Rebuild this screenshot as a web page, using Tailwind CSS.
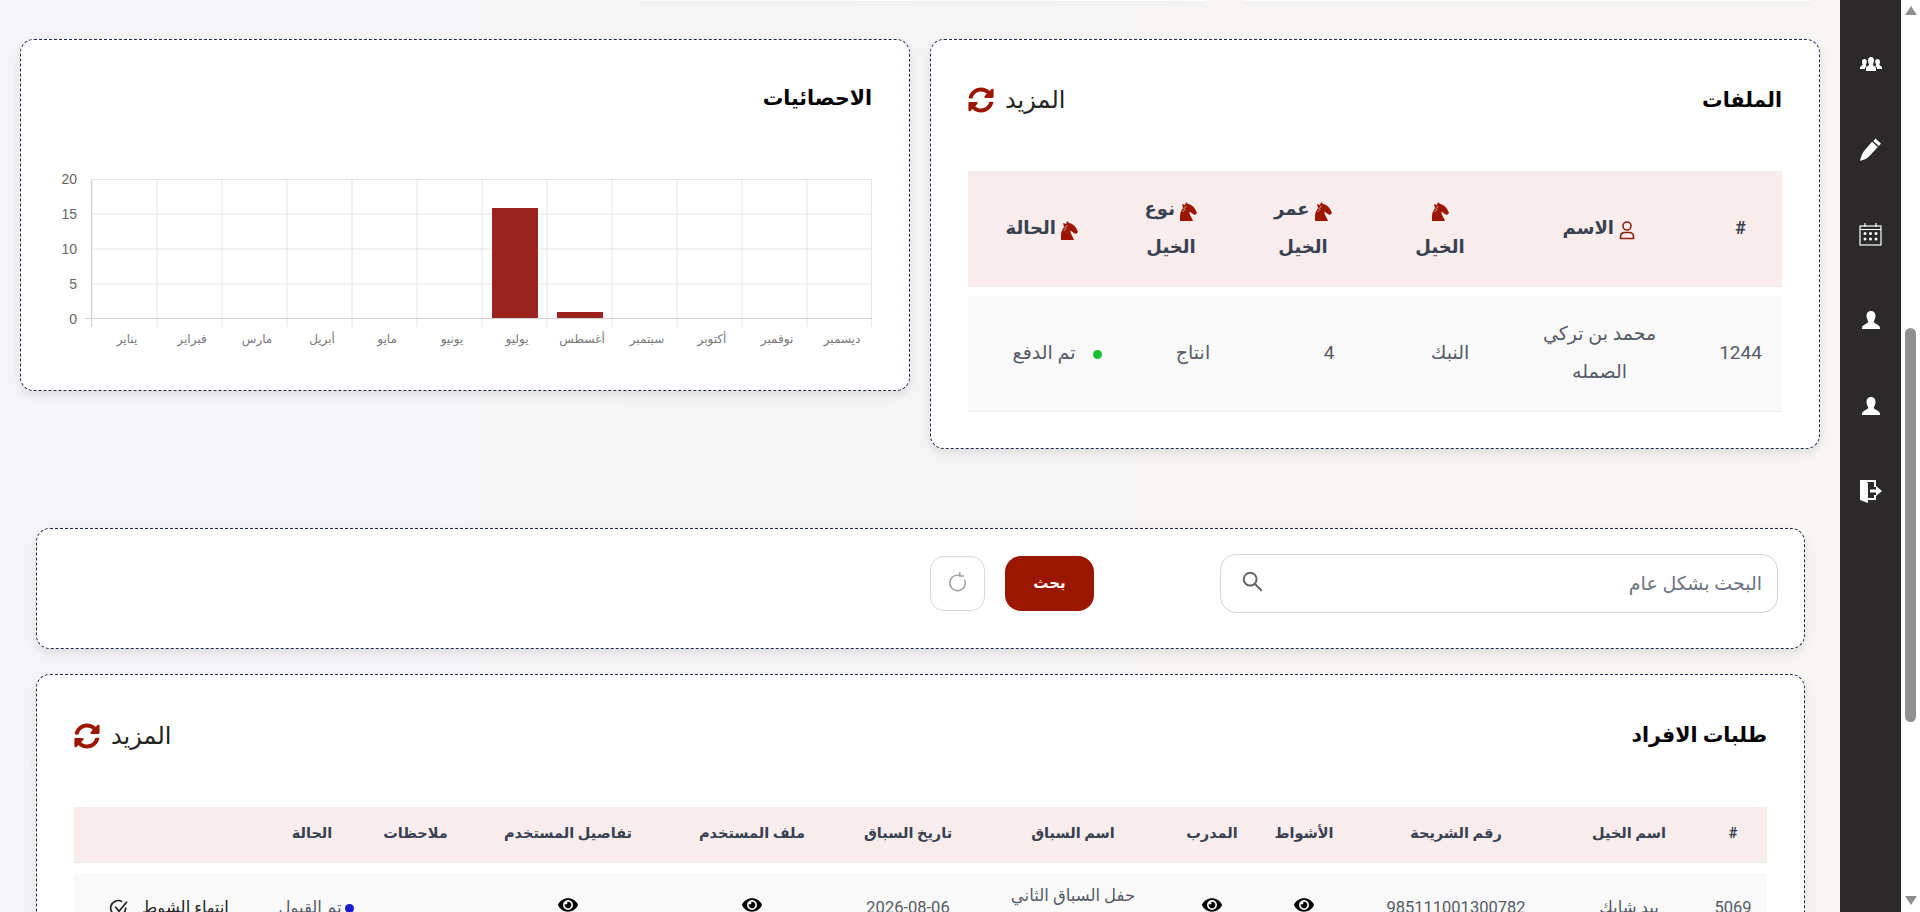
<!DOCTYPE html>
<html lang="ar">
<head>
  <meta charset="UTF-8">
  <meta name="viewport" content="width=device-width, initial-scale=1">
  <title>لوحة التحكم</title>
  <script src="https://cdn.jsdelivr.net/npm/@tailwindcss/browser@4"></script>
</head>
<body class="h-[912px] overflow-hidden font-['Roboto','DejaVu_Sans',sans-serif]">
  <div class="flex h-[912px] overflow-hidden">

    <!-- Page content -->
    <main dir="rtl" class="w-[1840px] h-[912px] overflow-hidden bg-gradient-to-l from-[#f7f6f2] to-[#f5f4f8]">

      <!-- Bottom edges of the cards scrolled out of view -->
      <div class="h-[39px] flex gap-[39px] pr-[30px]">
        <div class="w-[565px] h-px bg-white shadow-[0_2px_5px_rgba(0,0,0,0.12)]"></div>
        <div class="w-[566px] h-px bg-white shadow-[0_2px_5px_rgba(0,0,0,0.12)]"></div>
      </div>

      <div class="grid grid-cols-2 gap-[20px] px-[20px] items-start">
        <!-- Files card -->
        <section class="bg-white border border-dashed border-[#1c2b4a] rounded-[14px] shadow-[0_4px_10px_rgba(0,0,0,0.1)] px-[37px] pt-[40px] pb-[36px]">
          <div class="h-[40px] flex items-center justify-between">
            <h2 class="text-[20.5px] font-bold text-black">الملفات</h2>
            <a class="flex items-center gap-[11px] text-[24px] text-[#222]">
              <span>المزيد</span>
              <svg class="w-[26px] h-[26px] text-[#9b1500]" viewBox="0 0 512 512" fill="currentColor"><path d="M370.72 133.28C339.458 104.008 298.888 87.962 255.848 88c-77.458.068-144.328 53.178-162.791 126.85-1.344 5.363-6.122 9.15-11.651 9.15H24.103c-7.498 0-13.194-6.807-11.807-14.176C33.933 94.924 134.813 8 256 8c66.448 0 126.791 26.136 171.315 68.685L463.03 40.97C478.149 25.851 504 36.559 504 57.941V192c0 13.255-10.745 24-24 24H345.941c-21.382 0-32.09-25.851-16.971-40.971l41.75-41.749zM32 296h134.059c21.382 0 32.09 25.851 16.971 40.971l-41.75 41.75c31.262 29.273 71.835 45.319 114.876 45.28 77.418-.07 144.315-53.144 162.787-126.849 1.344-5.363 6.122-9.15 11.651-9.15h57.304c7.498 0 13.194 6.807 11.807 14.176C478.067 417.076 377.187 504 256 504c-66.448 0-126.791-26.136-171.315-68.685L48.97 471.03C33.851 486.149 8 475.441 8 454.059V320c0-13.255 10.745-24 24-24z"/></svg>
            </a>
          </div>
          <table class="mt-[51px] w-full table-fixed border-collapse text-center leading-[38px]">
            <thead class="bg-[#f9ecec] text-[#374151] font-bold text-[18px]">
              <tr class="h-[115px] border-b border-[#f0e6e6]">
                <th class="w-[83px]">#</th>
                <th class="w-[199px]">
                  <svg class="inline w-[18px] h-[20px] text-[#8f1f10]" viewBox="0 0 18 20" fill="none" stroke="currentColor" stroke-width="1.6"><circle cx="9" cy="6" r="4"/><path d="M2.5 18.5v-2a4 4 0 0 1 4-4h5a4 4 0 0 1 4 4v2z"/></svg>
                  الاسم
                </th>
                <th class="w-[120px]">
                  <svg class="inline w-[18px] h-[20px] text-[#9b1500]" viewBox="0 0 18 20" fill="currentColor"><path d="M1 20v-5c0-4 2-6 3-8L3 3l3 1 1-3 2 2c4 .5 7 4 9 9l-2 2-3-1.500-2.500-2c-.5 3 2.500 6 3.500 9.500z"/><path d="M3.500 11l3-3M4.500 8l3-3" stroke="#f9ecec" stroke-width=".7"/></svg>
                  <br>الخيل
                </th>
                <th class="w-[154px]">
                  <svg class="inline w-[18px] h-[20px] text-[#9b1500]" viewBox="0 0 18 20" fill="currentColor"><path d="M1 20v-5c0-4 2-6 3-8L3 3l3 1 1-3 2 2c4 .5 7 4 9 9l-2 2-3-1.500-2.500-2c-.5 3 2.500 6 3.500 9.500z"/><path d="M3.500 11l3-3M4.500 8l3-3" stroke="#f9ecec" stroke-width=".7"/></svg>
                  عمر<br>الخيل
                </th>
                <th class="w-[110px]">
                  <svg class="inline w-[18px] h-[20px] text-[#9b1500]" viewBox="0 0 18 20" fill="currentColor"><path d="M1 20v-5c0-4 2-6 3-8L3 3l3 1 1-3 2 2c4 .5 7 4 9 9l-2 2-3-1.500-2.500-2c-.5 3 2.500 6 3.500 9.500z"/><path d="M3.500 11l3-3M4.500 8l3-3" stroke="#f9ecec" stroke-width=".7"/></svg>
                  نوع<br>الخيل
                </th>
                <th>
                  <svg class="inline w-[18px] h-[20px] text-[#9b1500]" viewBox="0 0 18 20" fill="currentColor"><path d="M1 20v-5c0-4 2-6 3-8L3 3l3 1 1-3 2 2c4 .5 7 4 9 9l-2 2-3-1.500-2.500-2c-.5 3 2.500 6 3.500 9.500z"/><path d="M3.500 11l3-3M4.500 8l3-3" stroke="#f9ecec" stroke-width=".7"/></svg>
                  الحالة
                </th>
              </tr>
            </thead>
            <tbody class="text-[#555b66] text-[19px]">
              <tr class="h-[10px]"><td colspan="6"></td></tr>
              <tr class="h-[115px] bg-[#f9f9f9] border-b border-[#e5e7eb]">
                <td>1244</td>
                <td>محمد بن تركي<br>الصمله</td>
                <td class="pl-[20px]">النبك</td>
                <td class="pl-[52px]">4</td>
                <td class="pl-[44px]">انتاج</td>
                <td class="pl-[31px] whitespace-nowrap">
                  <span class="inline-block w-[9px] h-[9px] rounded-full bg-[#16c02f] ml-[18px]"></span>تم الدفع
                </td>
              </tr>
            </tbody>
          </table>
        </section>

        <!-- Statistics card -->
        <section class="bg-white border border-dashed border-[#1c2b4a] rounded-[14px] shadow-[0_4px_10px_rgba(0,0,0,0.1)] px-[37px] pt-[40px] pb-[30px]">
          <h2 class="h-[36px] leading-[36px] text-[20.5px] font-bold text-black">الاحصائيات</h2>
          <svg class="mt-[54px] w-[815px] h-[190px] [direction:ltr] font-['Liberation_Sans','DejaVu_Sans',sans-serif]" viewBox="0 0 815 190" fill="none">
            <g stroke="#e4e6e8">
              <path d="M35 9.5H815M35 44H815M35 79H815M35 114H815"/>
              <path d="M35 9.5V157M100 9.5V157M165 9.5V157M230 9.5V157M295 9.5V157M360 9.5V157M425 9.5V157M490 9.5V157M555 9.5V157M620 9.5V157M685 9.5V157M750 9.5V157M814.5 9.5V157"/>
            </g>
            <path d="M28 148.5H815" stroke="#cfd2d4"/>
            <path d="M34.5 9.5V157" stroke="#cfd2d4"/>
            <rect x="435" y="38" width="46" height="110" fill="#9b2320"/>
            <rect x="500" y="142" width="46" height="6" fill="#9b2320"/>
            <g fill="#666" font-size="14" text-anchor="end">
              <text x="20" y="14">20</text>
              <text x="20" y="49">15</text>
              <text x="20" y="84">10</text>
              <text x="20" y="119">5</text>
              <text x="20" y="154">0</text>
            </g>
            <g fill="#777" font-size="12" text-anchor="middle">
              <text x="70" y="173">يناير</text>
              <text x="135" y="173">فبراير</text>
              <text x="200" y="173">مارس</text>
              <text x="265" y="173">أبريل</text>
              <text x="330" y="173">مايو</text>
              <text x="395" y="173">يونيو</text>
              <text x="460" y="173">يوليو</text>
              <text x="525" y="173">أغسطس</text>
              <text x="590" y="173">سبتمبر</text>
              <text x="655" y="173">أكتوبر</text>
              <text x="720" y="173">نوفمبر</text>
              <text x="785" y="173">ديسمبر</text>
            </g>
          </svg>
        </section>
      </div>

      <!-- Search card -->
      <section class="mt-[79px] mr-[35px] ml-[36px] h-[121px] bg-white border border-dashed border-[#1c2b4a] rounded-[14px] shadow-[0_4px_10px_rgba(0,0,0,0.1)] pr-[26px] pb-[10px] flex items-center">
        <div class="w-[558px] h-[59px] border border-[#d1d5db] rounded-[16px] flex items-center justify-between px-[15px]">
          <span class="pt-[3px] text-[19px] text-[#6b7280]">البحث بشكل عام</span>
          <svg class="w-[22px] h-[22px] ml-[5px] mb-[5px]" viewBox="0 0 24 24" fill="none" stroke="#666" stroke-width="2.2" stroke-linecap="round"><circle cx="10" cy="10" r="7"/><path d="M15.500 15.500L22 22"/></svg>
        </div>
        <button class="mr-[126px] w-[89px] h-[55px] rounded-[16px] bg-[#9a1600] text-white font-bold text-[15px]">بحث</button>
        <button class="mr-[20px] w-[55px] h-[55px] rounded-[14px] border border-[#d8d8d8] flex items-center justify-center">
          <svg class="w-[22px] h-[22px]" viewBox="0 0 24 24" fill="none" stroke="#9a9a9a" stroke-width="1.500" stroke-linecap="round" stroke-linejoin="round"><path d="M19.500 9A8.500 8.500 0 1 1 14 3.800"/><path d="M14 0.500v3.800h3.800"/></svg>
        </button>
      </section>

      <!-- Members requests card -->
      <section class="mt-[25px] mr-[35px] ml-[36px] bg-white border border-dashed border-[#1c2b4a] rounded-[14px] shadow-[0_4px_10px_rgba(0,0,0,0.1)] px-[37px] pt-[41px] pb-[36px]">
        <div class="h-[40px] flex items-center justify-between">
          <h2 class="text-[20.5px] font-bold text-black">طلبات الافراد</h2>
          <a class="flex items-center gap-[11px] text-[24px] text-[#222]">
            <span>المزيد</span>
            <svg class="w-[26px] h-[26px] text-[#9b1500]" viewBox="0 0 512 512" fill="currentColor"><path d="M370.72 133.28C339.458 104.008 298.888 87.962 255.848 88c-77.458.068-144.328 53.178-162.791 126.85-1.344 5.363-6.122 9.15-11.651 9.15H24.103c-7.498 0-13.194-6.807-11.807-14.176C33.933 94.924 134.813 8 256 8c66.448 0 126.791 26.136 171.315 68.685L463.03 40.97C478.149 25.851 504 36.559 504 57.941V192c0 13.255-10.745 24-24 24H345.941c-21.382 0-32.09-25.851-16.971-40.971l41.75-41.749zM32 296h134.059c21.382 0 32.09 25.851 16.971 40.971l-41.75 41.75c31.262 29.273 71.835 45.319 114.876 45.28 77.418-.07 144.315-53.144 162.787-126.849 1.344-5.363 6.122-9.15 11.651-9.15h57.304c7.498 0 13.194 6.807 11.807 14.176C478.067 417.076 377.187 504 256 504c-66.448 0-126.791-26.136-171.315-68.685L48.97 471.03C33.851 486.149 8 475.441 8 454.059V320c0-13.255 10.745-24 24-24z"/></svg>
          </a>
        </div>
        <table class="mt-[51px] w-full table-fixed border-collapse text-center leading-[24px]">
          <thead class="bg-[#f9ecec] text-[#374151] font-bold text-[14.5px]">
            <tr class="h-[56px] border-b border-[#f0e6e6]">
              <th class="w-[68px]">#</th>
              <th class="w-[140px]">اسم الخيل</th>
              <th class="w-[206px]">رقم الشريحة</th>
              <th class="w-[98px]">الأشواط</th>
              <th class="w-[86px]">المدرب</th>
              <th class="w-[192px]">اسم السباق</th>
              <th class="w-[138px]">تاريخ السباق</th>
              <th class="w-[174px]">ملف المستخدم</th>
              <th class="w-[194px]">تفاصيل المستخدم</th>
              <th class="w-[111px]">ملاحظات</th>
              <th class="w-[96px]">الحالة</th>
              <th></th>
            </tr>
          </thead>
          <tbody class="text-[#555b66] text-[16.5px]">
            <tr class="h-[10px]"><td colspan="12"></td></tr>
            <tr class="h-[70px] bg-[#f9f9f9]">
              <td>5069</td>
              <td>بيد شايك</td>
              <td>985111001300782</td>
              <td><svg class="inline align-middle mb-[6px] w-[20px] h-[18px] text-black" viewBox="0 0 576 512" fill="currentColor"><path d="M572.52 241.4C518.29 135.59 410.93 64 288 64S57.68 135.64 3.48 241.41a32.35 32.35 0 0 0 0 29.19C57.71 376.41 165.07 448 288 448s230.32-71.64 284.52-177.41a32.35 32.35 0 0 0 0-29.19zM288 400a144 144 0 1 1 144-144 143.93 143.93 0 0 1-144 144zm0-240a95.31 95.31 0 0 0-25.31 3.79 47.85 47.85 0 0 1-66.9 66.9A95.78 95.78 0 1 0 288 160z"/></svg></td>
              <td><svg class="inline align-middle mb-[6px] w-[20px] h-[18px] text-black" viewBox="0 0 576 512" fill="currentColor"><path d="M572.52 241.4C518.29 135.59 410.93 64 288 64S57.68 135.64 3.48 241.41a32.35 32.35 0 0 0 0 29.19C57.71 376.41 165.07 448 288 448s230.32-71.64 284.52-177.41a32.35 32.35 0 0 0 0-29.19zM288 400a144 144 0 1 1 144-144 143.93 143.93 0 0 1-144 144zm0-240a95.31 95.31 0 0 0-25.31 3.79 47.85 47.85 0 0 1-66.9 66.9A95.78 95.78 0 1 0 288 160z"/></svg></td>
              <td class="pb-[24px]">حفل السباق الثاني</td>
              <td>2026-08-06</td>
              <td><svg class="inline align-middle mb-[6px] w-[20px] h-[18px] text-black" viewBox="0 0 576 512" fill="currentColor"><path d="M572.52 241.4C518.29 135.59 410.93 64 288 64S57.68 135.64 3.48 241.41a32.35 32.35 0 0 0 0 29.19C57.71 376.41 165.07 448 288 448s230.32-71.64 284.52-177.41a32.35 32.35 0 0 0 0-29.19zM288 400a144 144 0 1 1 144-144 143.93 143.93 0 0 1-144 144zm0-240a95.31 95.31 0 0 0-25.31 3.79 47.85 47.85 0 0 1-66.9 66.9A95.78 95.78 0 1 0 288 160z"/></svg></td>
              <td><svg class="inline align-middle mb-[6px] w-[20px] h-[18px] text-black" viewBox="0 0 576 512" fill="currentColor"><path d="M572.52 241.4C518.29 135.59 410.93 64 288 64S57.68 135.64 3.48 241.41a32.35 32.35 0 0 0 0 29.19C57.71 376.41 165.07 448 288 448s230.32-71.64 284.52-177.41a32.35 32.35 0 0 0 0-29.19zM288 400a144 144 0 1 1 144-144 143.93 143.93 0 0 1-144 144zm0-240a95.31 95.31 0 0 0-25.31 3.79 47.85 47.85 0 0 1-66.9 66.9A95.78 95.78 0 1 0 288 160z"/></svg></td>
              <td></td>
              <td class="pl-[8px] whitespace-nowrap"><span class="inline-block w-[9px] h-[9px] rounded-full bg-[#1a1ad0] ml-[3px]"></span>تم القبول</td>
              <td class="text-[#222]">
                <span class="inline-flex items-center gap-[13px]">إنتهاء الشوط
                  <svg class="w-[20px] h-[20px]" viewBox="0 0 24 24" fill="none" stroke="#222" stroke-width="2" stroke-linecap="round"><path d="M20 12a9 9 0 1 1-5-8"/><path d="M8 11l4 5 9-11"/></svg>
                </span>
              </td>
            </tr>
          </tbody>
        </table>
      </section>
    </main>

    <!-- Icon rail -->
    <aside class="w-[61px] h-[912px] bg-[#2b2929] flex flex-col items-center pt-[21px] text-white">
      <div class="h-[85.5px] flex items-center">
        <svg class="w-[22px] h-[14px]" viewBox="0 0 22 14" fill="currentColor"><path d="M11 0c2 0 3 1.500 3 3.500S13 7 12.800 7.800c.2 1 3.200 1.700 3.200 3.700V14H6v-2.500c0-2 3-2.700 3.200-3.700C9 7 8 5.500 8 3.500S9 0 11 0z"/><path d="M4.500 2c1.500 0 2.300 1 2.300 2.500 0 1.800-1 3-1 3.500 0 .8 1 1.200 1 1.200-1.200.6-2 1.400-2 2.800H0v-1.500c0-1.500 2.500-2 2.700-2.800C2.500 7 2 6 2 4.500 2 3 3 2 4.500 2zM17.500 2C19 2 20 3 20 4.500c0 1.500-.5 2.500-.7 3.200.2.8 2.700 1.300 2.700 2.800V12h-4.800c0-1.400-.8-2.200-2-2.800 0 0 1-.4 1-1.200 0-.5-1-1.700-1-3.500C15.200 3 16 2 17.500 2z"/></svg>
      </div>
      <div class="h-[85.5px] flex items-center">
        <svg class="w-[24px] h-[24px]" viewBox="0 0 24 24" fill="currentColor"><path d="M16.500 1.500l5.500 5-2.200 2.400-5.500-5z"/><path d="M13 4.800l5.800 5.200-8.800 9.500C7.500 22 3.500 23.300 1 24c.6-3 1.800-7 4-10z"/></svg>
      </div>
      <div class="h-[85.5px] flex items-center">
        <svg class="w-[23px] h-[23px]" viewBox="0 0 23 23" fill="none" stroke="currentColor" stroke-width="1.200"><rect x="1" y="3" width="21" height="19"/><path d="M1 6.500h21M6 0v4M17 0v4" /><g fill="currentColor" stroke="none"><circle cx="6" cy="10.500" r="1.500"/><circle cx="11.500" cy="10.500" r="1.500"/><circle cx="17" cy="10.500" r="1.500"/><circle cx="6" cy="16" r="1.500"/><circle cx="11.500" cy="16" r="1.500"/><circle cx="17" cy="16" r="1.500"/></g></svg>
      </div>
      <div class="h-[85.5px] flex items-center">
        <svg class="w-[18px] h-[18px]" viewBox="0 0 18 18" fill="currentColor"><path d="M9 0c3 0 4.500 2.300 4.500 5 0 2.500-1.300 4.500-1.800 5.700 0 1.500 6.300 2.800 6.300 6.300v1H0v-1c0-3.500 6.300-4.800 6.300-6.300C5.800 9.500 4.500 7.500 4.500 5 4.500 2.300 6 0 9 0z"/></svg>
      </div>
      <div class="h-[85.5px] flex items-center">
        <svg class="w-[18px] h-[18px]" viewBox="0 0 18 18" fill="currentColor"><path d="M9 0c3 0 4.500 2.300 4.500 5 0 2.500-1.300 4.500-1.800 5.700 0 1.500 6.300 2.800 6.300 6.300v1H0v-1c0-3.500 6.300-4.800 6.300-6.300C5.800 9.500 4.500 7.500 4.500 5 4.500 2.300 6 0 9 0z"/></svg>
      </div>
      <div class="h-[85.5px] flex items-center">
        <svg class="w-[24px] h-[24px]" viewBox="0 0 24 24" fill="currentColor"><path d="M1 1h16v7h-2V3H8v18H1z" /><path d="M1 1l8 3v20l-8-3z"/><path d="M11 10.500h6V7l6 5-6 5v-3.500h-6z"/><path d="M15 16h2v5H9v-2h6z"/></svg>
      </div>
    </aside>

    <!-- Scrollbar -->
    <div class="w-[19px] h-[912px] bg-white flex flex-col items-center">
      <div class="mt-[6px] w-0 h-0 border-x-[6px] border-x-transparent border-b-[9px] border-b-[#8f8f8f]"></div>
      <div class="mt-[313px] w-[11px] h-[394px] rounded-[6px] bg-[#8f8f8f]"></div>
      <div class="mt-[174px] w-0 h-0 border-x-[6px] border-x-transparent border-t-[9px] border-t-[#8f8f8f]"></div>
    </div>
  </div>
</body>
</html>
